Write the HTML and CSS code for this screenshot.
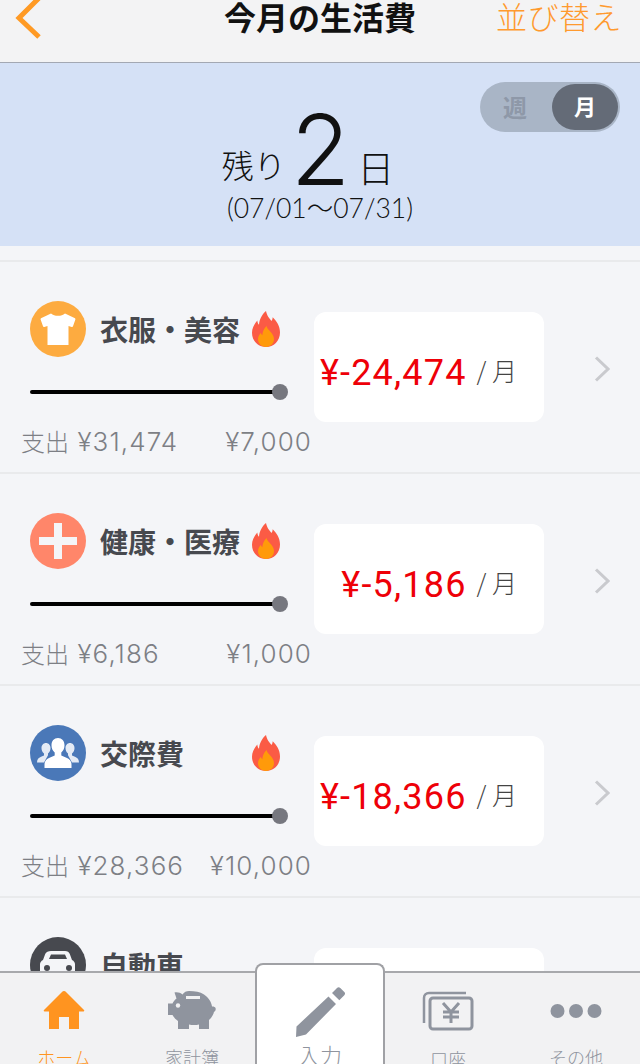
FILE: index.html
```html
<!DOCTYPE html>
<html lang="ja">
<head>
    <meta charset="UTF-8">
    <meta name="viewport" content="width=device-width, initial-scale=1.0">
    <title>今月の生活費</title>
    <link rel="stylesheet" href="styles.css">
</head>
<body>

    <svg class="defs" width="0" height="0">
        <symbol id="flame" viewBox="0 0 28 36">
            <path fill="#fb5b45" d="M14 0c1 5 3.500 7.500 5.500 10 .8-1 1.200-2.300 1.200-3.700C24.500 10 28 15 28 21.500 28 30 21.800 36 14 36S0 30 0 21.800c0-5.300 2.700-9.100 5.300-12.300.2 1.800.7 3.200 1.700 4.300C7.300 8.300 10 3.500 14 0z"/>
            <path fill="#ff9a0a" d="M14.500 15c.5 2.500 2.500 4 4.200 6.100 1.700 2.100 3.300 4.100 3.300 7 0 4.500-3.500 7.900-8 7.900s-8-3.400-8-7.700c0-2.700 1.300-4.500 2.800-6.300.3.900.8 1.700 1.500 2.200.2-3.500 1.700-6.700 4.200-9.200z"/>
        </symbol>
        <symbol id="chevron" viewBox="0 0 16 26">
            <path fill="none" stroke="#c9cace" stroke-width="3" d="M2 1.500 14 13 2 24.500"/>
        </symbol>
    </svg>

    <div class="screen">
        <header class="topbar">
            <svg class="back" width="28" height="40" viewBox="0 0 28 40"><path fill="none" stroke="#ff9a24" stroke-width="5" d="M25 -2 5 18 25 37"/></svg>
            <h1>今月の生活費</h1>
            <span class="sort">並び替え</span>
        </header>

        <section class="summary">
            <div class="toggle">
                <span class="toggle-off">週</span>
                <span class="toggle-on">月</span>
            </div>
            <div class="remain"><span class="remain-label">残り</span><span class="remain-num">2</span><span class="remain-unit">日</span></div>
            <div class="period">(07/01～07/31)</div>
        </section>

        <main class="list">
            <div class="row">
                <div class="row-left">
                    <div class="row-head">
                        <span class="cat cat-clothes">
                            <svg width="36" height="36" viewBox="0 0 36 36"><path fill="#fff" d="M11 2.500c1.800 1.500 4.200 2.300 7 2.300s5.200-.8 7-2.300l9.500 4.500c.8.400 1.100 1 .8 1.800l-2.300 6.500c-.2.600-.7.800-1.300.6l-3.200-1V34H7.500V14.900l-3.200 1c-.6.200-1.100 0-1.300-.6L.7 8.800c-.3-.8 0-1.400.8-1.800z"/></svg>
                        </span>
                        <span class="row-title">衣服・美容</span>
                        <svg class="flame" width="28" height="36"><use href="#flame"/></svg>
                    </div>
                    <div class="bar"><span class="bar-knob"></span></div>
                    <div class="row-nums"><span><span class="spent">支出</span> ¥31,474</span><span>¥7,000</span></div>
                </div>
                <div class="card"><span class="amount">¥-24,474</span><span class="per">/ 月</span></div>
                <svg class="go" width="16" height="26"><use href="#chevron"/></svg>
            </div>

            <div class="row">
                <div class="row-left">
                    <div class="row-head">
                        <span class="cat cat-health">
                            <svg width="38" height="36" viewBox="0 0 38 36"><path fill="#f4f5f8" d="M15 0h8v14h15v8H23v14h-8V22H0v-8h15z"/></svg>
                        </span>
                        <span class="row-title">健康・医療</span>
                        <svg class="flame" width="28" height="36"><use href="#flame"/></svg>
                    </div>
                    <div class="bar"><span class="bar-knob"></span></div>
                    <div class="row-nums"><span><span class="spent">支出</span> ¥6,186</span><span>¥1,000</span></div>
                </div>
                <div class="card"><span class="amount">¥-5,186</span><span class="per">/ 月</span></div>
                <svg class="go" width="16" height="26"><use href="#chevron"/></svg>
            </div>

            <div class="row">
                <div class="row-left">
                    <div class="row-head">
                        <span class="cat cat-social">
                            <svg width="42" height="30" viewBox="0 0 42 30"><path fill="#fff" opacity=".85" d="M9 5c2.600 0 4.500 2.200 4.500 5.200 0 2.200-1 4.100-2.500 5.300v1.800L7 24.500H0c0-3 1.500-4.700 4-5.700l3-1.300v-2C5.500 14.300 4.500 12.400 4.500 10.200 4.500 7.200 6.400 5 9 5zM33 5c2.600 0 4.500 2.200 4.500 5.200 0 2.200-1 4.100-2.500 5.300v2l3 1.300c2.500 1 4 2.700 4 5.700h-7l-4-7.200v-1.800c-1.500-1.200-2.500-3.100-2.500-5.300C28.500 7.200 30.400 5 33 5z"/><path fill="#fff" d="M21 0c3.900 0 6.500 3 6.500 7.300 0 3-1.200 5.700-3.200 7.200v3l5.700 2.500c3 1.300 4.500 3.600 4.500 6.700V30H7.500v-3.300c0-3.100 1.500-5.400 4.500-6.700l5.700-2.500v-3c-2-1.500-3.200-4.200-3.200-7.200C14.500 3 17.100 0 21 0z"/></svg>
                        </span>
                        <span class="row-title">交際費</span>
                        <svg class="flame" width="28" height="36"><use href="#flame"/></svg>
                    </div>
                    <div class="bar"><span class="bar-knob"></span></div>
                    <div class="row-nums"><span><span class="spent">支出</span> ¥28,366</span><span>¥10,000</span></div>
                </div>
                <div class="card"><span class="amount">¥-18,366</span><span class="per">/ 月</span></div>
                <svg class="go" width="16" height="26"><use href="#chevron"/></svg>
            </div>

            <div class="row">
                <div class="row-left">
                    <div class="row-head">
                        <span class="cat cat-car">
                            <svg width="36" height="36" viewBox="0 0 36 36"><path fill="#f4f5f8" fill-rule="evenodd" d="M11 4h14c2.500 0 4 1 4.800 3l2.200 6c2 1 3 2.500 3 4.500V28H0V17.500C0 15.500 1 14 3 13l2.200-6C6 5 8.500 4 11 4zm0 3.500L9 12h18l-2-4.500z"/><circle cx="7" cy="21" r="3" fill="#47494f"/><circle cx="29" cy="21" r="3" fill="#47494f"/></svg>
                        </span>
                        <span class="row-title">自動車</span>
                    </div>
                </div>
                <div class="card"></div>
            </div>
        </main>

        <footer class="tabbar">
            <div class="tab tab-active">
                <svg width="42" height="40" viewBox="0 0 42 40"><path fill="#ff9420" d="M21 1c.8 0 1.500.4 2 .9L41 20c.6.7.3 1.500-.6 1.500H36V39H26V27h-10v12H6V21.500H1.600c-.9 0-1.200-.8-.6-1.500L19 1.900c.5-.5 1.200-.9 2-.9z"/></svg>
                <span>ホーム</span>
            </div>
            <div class="tab">
                <svg width="50" height="40" viewBox="0 0 50 40"><path fill="#8f949e" d="M22 1c6 0 11 .8 15 3.500 4.500 3 7.500 7.500 8 12 1.500-.2 3 .3 3.500 1.500.5 1.500 0 3.200-1.500 3.800-.6 3.500-3 6.500-5 8.200V39H32v-4.500c-3 .7-7 .7-10 0V39H11v-8c-2.500-1.700-4.300-3.800-5.500-6H1V13.500h4.500c1-2 2.300-3.700 4-5L7.500 2.500c3-.5 6 .2 8 2C17 2 19.500 1 22 1zM19 6v3h14V6z"/><circle cx="11" cy="15.500" r="2.200" fill="#f2f2f3"/></svg>
                <span>家計簿</span>
            </div>
            <div class="tab tab-input">
                <svg width="50" height="50" viewBox="0 0 50 50"><path fill="#8f949e" d="M33.500 9.500 41 17 11 47.500 1 50l.5-10.500zM37 6l5-5c1-1 2.300-1 3.300 0l4 4c1 1 1 2.300 0 3.300l-5 5z"/></svg>
                <span>入力</span>
            </div>
            <div class="tab">
                <svg width="52" height="42" viewBox="0 0 52 42"><path fill="none" stroke="#8f949e" stroke-width="2.500" d="M44 3H7c-3 0-5 2-5 5v25"/><rect x="8" y="8" width="42" height="31" rx="3" fill="#f2f2f3" stroke="#8f949e" stroke-width="3"/><path fill="none" stroke="#8f949e" stroke-width="3" d="M21 13l8 9 8-9M29 22v11M21 22h16M21 27h16"/></svg>
                <span>口座</span>
            </div>
            <div class="tab">
                <svg class="dots" width="52" height="16" viewBox="0 0 52 16"><circle cx="7.500" cy="8" r="7" fill="#8f949e"/><circle cx="26" cy="8" r="7" fill="#8f949e"/><circle cx="44.500" cy="8" r="7" fill="#8f949e"/></svg>
                <span>その他</span>
            </div>
        </footer>
    </div>

</body>
</html>
```

FILE: styles.css
```css
body {
    margin: 0;
    padding: 0;
    font-family: "Noto Sans CJK JP", "Noto Sans", sans-serif;
    background-color: #f4f5f8;
}
h1 {
    margin: 0;
}
.defs {
    display: block;
    height: 0;
}
.screen {
    display: flex;
    flex-direction: column;
    height: 1064px;
    overflow: hidden;
}

/* top bar */
.topbar {
    flex: none;
    display: flex;
    justify-content: center;
    height: 62px;
    background-color: #f3f3f4;
    border-bottom: 1px solid #a3a8b3;
    position: relative;
}
.topbar h1 {
    font-size: 32px;
    line-height: 32px;
    font-weight: 700;
    color: #111;
}
.back {
    position: absolute;
    left: 14px;
    top: 0;
}
.sort {
    position: absolute;
    right: 18px;
    top: 0;
    font-size: 31px;
    letter-spacing: .5px;
    line-height: 32px;
    font-weight: 300;
    color: #ff9a2e;
}

/* summary */
.summary {
    flex: none;
    height: 183px;
    background-color: #d5e1f6;
    position: relative;
    display: flex;
    flex-direction: column;
    align-items: center;
}
.toggle {
    position: absolute;
    right: 20px;
    top: 19px;
    width: 140px;
    height: 50px;
    border-radius: 25px;
    background-color: #a9b5c6;
}
.toggle-off {
    position: absolute;
    left: 23px;
    top: 0;
    line-height: 50px;
    font-size: 24px;
    font-weight: 700;
    color: #8e98a8;
}
.toggle-on {
    position: absolute;
    right: 2px;
    top: 2px;
    width: 66px;
    height: 46px;
    border-radius: 23px;
    background-color: #646b77;
    color: #fff;
    font-size: 22px;
    font-weight: 700;
    line-height: 42px;
    text-align: center;
}
.remain {
    height: 112px;
    line-height: 112px;
    margin: 31px 24px 0 0;
    white-space: nowrap;
    color: #111;
}
.remain-label {
    font-size: 32px;
    font-weight: 300;
    vertical-align: 7px;
}
.remain-num {
    font-family: "Inter", sans-serif;
    font-weight: 300;
    font-size: 97px;
    margin: 0 7px 0 5px;
}
.remain-unit {
    font-size: 37px;
    font-weight: 300;
    vertical-align: 2px;
}
.period {
    font-family: "Lato", "Noto Sans CJK JP", sans-serif;
    font-weight: 300;
    font-size: 26.5px;
    line-height: 30px;
    margin-top: -13px;
    color: #111;
}

/* list */
.list {
    flex: 1;
    min-height: 0;
    overflow: hidden;
    padding-top: 14px;
    margin-bottom: -2px;
    background-color: #f4f5f8;
}
.row {
    display: flex;
    align-items: flex-start;
    height: 210px;
    border-top: 2px solid #e9eaec;
}
.row-left {
    box-sizing: border-box;
    width: 314px;
    padding-top: 39px;
}
.row-head {
    display: flex;
    align-items: center;
    height: 56px;
    padding-left: 30px;
}
.cat {
    flex: none;
    display: flex;
    align-items: center;
    justify-content: center;
    width: 56px;
    height: 56px;
    border-radius: 50%;
    overflow: hidden;
}
.cat-clothes { background-color: #fdab40; }
.cat-health { background-color: #ff866a; }
.cat-social { background-color: #4a78b8; }
.cat-car { background-color: #47494f; }
.row-title {
    width: 152px;
    margin-left: 14px;
    font-size: 28px;
    font-weight: 700;
    color: #47494f;
    line-height: 36px;
}
.flame {
    flex: none;
}
.bar {
    position: relative;
    width: 250px;
    height: 4px;
    margin: 33px 0 0 30px;
    background-color: #000;
    border-radius: 2px;
}
.bar-knob {
    position: absolute;
    right: -8px;
    top: -6px;
    width: 16px;
    height: 16px;
    border-radius: 50%;
    background-color: #76777f;
}
.row-nums {
    display: flex;
    justify-content: space-between;
    margin-top: 30px;
    padding: 0 2px 0 21px;
    font-family: "Inter", "Noto Sans CJK JP", sans-serif;
    font-size: 26px;
    letter-spacing: 1.1px;
    line-height: 36px;
    font-weight: 300;
    color: #7d7f85;
}
.spent {
    font-size: 24px;
    letter-spacing: 0;
}
.card {
    flex: none;
    display: flex;
    align-items: center;
    justify-content: flex-end;
    box-sizing: border-box;
    width: 230px;
    height: 110px;
    margin-top: 50px;
    padding: 6px 27px 0 0;
    background-color: #fff;
    border-radius: 12px;
}
.amount {
    font-family: "Roboto", sans-serif;
    font-size: 36px;
    letter-spacing: 1.2px;
    margin-top: 6px;
    color: #ee0008;
}
.per {
    margin-left: 10px;
    font-size: 25px;
    font-weight: 300;
    color: #444;
}
.go {
    flex: none;
    margin: 94px 0 0 50px;
}

/* tab bar */
.tabbar {
    flex: none;
    display: grid;
    grid-template-columns: repeat(5, 128px);
    height: 91px;
    background-color: #f2f2f3;
    border-top: 2px solid #a8a9ac;
    position: relative;
}
.tab {
    display: flex;
    flex-direction: column;
    align-items: center;
    padding-top: 17px;
    font-size: 18px;
    font-weight: 300;
    line-height: 26px;
    color: #8f949e;
}
.tab svg {
    flex: none;
    margin-bottom: 14px;
}
.tab-active {
    color: #ff9420;
}
.tab-input {
    box-sizing: border-box;
    width: 130px;
    height: 110px;
    margin: -10px 0 0 -1px;
    padding-top: 22px;
    background-color: #fff;
    border: 2px solid #a0a1a5;
    border-bottom: none;
    border-radius: 8px 8px 0 0;
    font-size: 22px;
}
.tab-input svg {
    margin-bottom: 4px;
}
.tab .dots {
    margin: 13px 0 25px;
}
```
